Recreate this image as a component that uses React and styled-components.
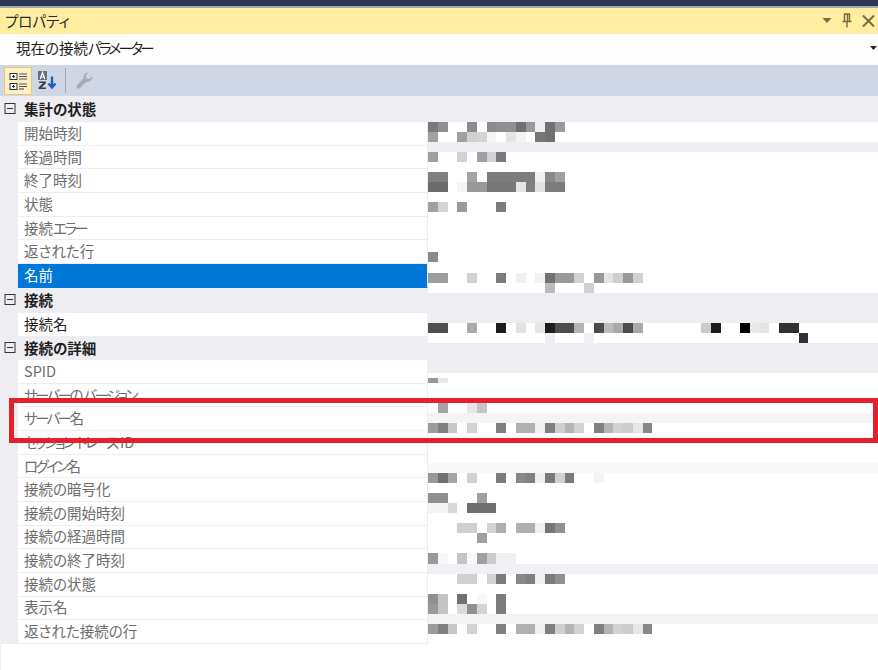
import React from "react";
import styled, {createGlobalStyle} from "styled-components";

const GlobalStyle = createGlobalStyle`
html, body {
    margin: 0;
    padding: 0;
    background: #fff;
}
body {
    font-family: "Noto Sans CJK JP", "Liberation Sans", sans-serif;
    font-feature-settings: "palt";
}
`;

const Page = styled.div`
position: relative;
width: 878px;
height: 670px;
overflow: hidden;
background: #fff;
`;

const TopEdge = styled.div`
height: 6px;
background: #293955;
border-bottom: 2px solid #a3a7ae;
`;

const TitleBar = styled.div`
display: flex;
align-items: center;
height: 26px;
padding: 0 3px 1px 5px;
box-sizing: border-box;
background: #ffee9f;
color: #2a2a2a;
font-size: 14.5px;
`;

const TitleText = styled.div`
flex-grow: 1;
`;

const TitleIcons = styled.div`
display: flex;
align-items: center;
gap: 10px;
`;

const Combo = styled.div`
display: flex;
align-items: center;
height: 31px;
padding: 0 1px 4px 16px;
box-sizing: border-box;
background: #fdfdfd;
color: #1e1e1e;
font-size: 14.5px;
`;

const ComboText = styled.div`
flex-grow: 1;
`;

const Toolbar = styled.div`
display: flex;
align-items: center;
gap: 2px;
height: 31px;
padding: 0 4px;
background: #cfd6e5;
`;

const ToolButton = styled.div`
display: flex;
align-items: center;
justify-content: center;
width: ${props => props.$active ? "28px" : "26px"};
height: ${props => props.$active ? "28px" : "26px"};
box-sizing: border-box;
background: ${props => props.$active ? "#fff1c4" : "transparent"};
border: 1px solid ${props => props.$active ? "#e5c87b" : "transparent"};
`;

const ToolSeparator = styled.div`
width: 1px;
height: 25px;
margin: 0 3px;
background: #a0a7b5;
`;

const Grid = styled.div`
display: grid;
border-left: 1px solid #f1f1f4;
`;

const Row = styled.div`
display: flex;
height: 23.65px;
`;

const Gutter = styled.div`
flex: none;
width: 17px;
background: #eeeef2;
`;

const Name = styled.div`
display: flex;
align-items: center;
flex: none;
width: 410px;
box-sizing: border-box;
padding: 0 0 2px 6px;
font-size: 14.5px;
white-space: pre;
overflow: hidden;
color: ${props => props.$selected ? "#fff" : props.$editable ? "#1e1e1e" : "#6d6d6d"};
background: ${props => props.$selected ? "#0078d7" : "#fff"};
border-bottom: 1px solid ${props => props.$selected ? "#0078d7" : "#eeeef2"};
border-right: 1px solid #eeeef2;
`;

const Kana = styled.span`
letter-spacing: -2.6px;
`;

const Category = styled.div`
display: flex;
align-items: center;
height: ${props => props.$height}px;
box-sizing: border-box;
padding-bottom: 2px;
background: #eeeef2;
color: #1e1e1e;
font-size: 14.5px;
font-weight: 700;
`;

const Expander = styled.span`
display: flex;
flex: none;
width: 20px;
padding-left: 3px;
`;

const Rest = styled.div`
height: 26px;
border-left: 1px solid #f1f1f4;
`;

const ValueMosaic = styled.svg`
position: absolute;
left: 0;
top: 0;
pointer-events: none;
`;

const RedFrame = styled.div`
position: absolute;
left: 9px;
top: 398px;
width: 869px;
height: 45px;
box-sizing: border-box;
border: 5px solid #e3202b;
`;

const rows = [
    {category: "集計の状態", height: 26.2},
    {name: "開始時刻"},
    {name: "経過時間"},
    {name: "終了時刻"},
    {name: "状態"},
    {name: "接続エラー"},
    {name: "返された行"},
    {name: "名前", selected: true},
    {category: "接続", height: 25.2},
    {name: "接続名", editable: true},
    {category: "接続の詳細", height: 23.65},
    {name: "SPID"},
    {name: "サーバーのバージョン"},
    {name: "サーバー名"},
    {name: "セッション トレース ID"},
    {name: "ログイン名"},
    {name: "接続の暗号化"},
    {name: "接続の開始時刻"},
    {name: "接続の経過時間"},
    {name: "接続の終了時刻"},
    {name: "接続の状態"},
    {name: "表示名"},
    {name: "返された接続の行"},
];

// y, height, then [column, grey] pairs of the blurred values
const lastRow = [[0, 0x9c], [1, 0x80], [2, 0xc8], [4, 0xd2], [7, 0x80], [9, 0xb0], [10, 0xb0], [11, 0xf0], [12, 0x80], [13, 0xcf], [14, 0xb4], [15, 0xd2], [17, 0x80], [18, 0xb4], [19, 0xd2], [20, 0xcc], [21, 0xe6], [22, 0x88]];
const mosaic = [
    [122, 10, [[0, 0x7a], [1, 0x90], [4, 0x8c], [6, 0x8c], [7, 0x90], [8, 0x90], [9, 0x70], [10, 0x99], [11, 0xee], [12, 0x70], [13, 0x99]]],
    [132, 10, [[0, 0xa0], [3, 0xa0], [4, 0xd0], [5, 0xd4], [6, 0xf5], [8, 0xe4], [9, 0xf4], [11, 0x77], [12, 0x70]]],
    [152, 10, [[0, 0xa0], [3, 0xd2], [5, 0xa0], [6, 0xd2], [7, 0x7a]]],
    [172, 10, [[0, 0x80], [1, 0x80], [4, 0xa4], [6, 0x7c], [7, 0x7c], [8, 0x7c], [9, 0x7c], [10, 0x7c], [11, 0xf0], [12, 0x88], [13, 0xa0]]],
    [182, 10, [[0, 0x6c], [1, 0x6c], [3, 0xf4], [4, 0x99], [5, 0x99], [6, 0x77], [7, 0x77], [8, 0x77], [9, 0xe5], [10, 0x80], [11, 0xe2], [12, 0x7c], [13, 0x7c]]],
    [202, 10, [[0, 0xa0], [1, 0xd4], [3, 0x9a], [7, 0x7c]]],
    [252, 10, [[0, 0x8a]]],
    [273, 10, [[0, 0x9c], [1, 0x9c], [4, 0xd2], [7, 0x7c], [9, 0xf0], [11, 0xf2], [12, 0x70], [13, 0x99], [14, 0x99], [15, 0xd2], [17, 0x99], [18, 0xe4], [19, 0xcf], [20, 0x99], [21, 0xd2]]],
    [283, 10, [[12, 0xbb], [16, 0xd0]]],
    [323, 10, [[0, 0x50], [1, 0x50], [4, 0xaa], [7, 0x1c], [9, 0xe2], [11, 0xe6], [12, 0x1c], [13, 0x4c], [14, 0x4c], [15, 0xb4], [17, 0x4c], [18, 0xbb], [19, 0xaa], [20, 0x4c], [21, 0xaa], [28, 0xcc], [29, 0x1c], [32, 0x00], [33, 0xe8], [34, 0xe4], [36, 0x30], [37, 0x30]]],
    [333, 10, [[12, 0xee], [16, 0xf0], [38, 0x33]]],
    [378, 5, [[0, 0x99], [1, 0xe8]]],
    [403, 10, [[1, 0xa4], [4, 0xe6], [5, 0xc4]]],
    [423, 10, lastRow],
    [473, 10, [[0, 0x99], [1, 0x70], [2, 0xa4], [4, 0xd0], [7, 0x7c], [9, 0x88], [10, 0x80], [11, 0xf0], [12, 0x7a], [13, 0xd0], [14, 0x7c], [17, 0xf4]]],
    [493, 10, [[0, 0x90], [1, 0x90], [5, 0xa0]]],
    [503, 10, [[0, 0xf4], [1, 0xf4], [2, 0xd8], [4, 0x70], [5, 0x70], [6, 0x70]]],
    [523, 10, [[3, 0xd0], [4, 0xd0], [6, 0xd4], [7, 0xb0], [9, 0xb0], [10, 0xb0], [11, 0xf0], [12, 0x77], [13, 0x90]]],
    [533, 10, [[5, 0xa0]]],
    [553, 11, [[0, 0x99], [1, 0xf8], [3, 0xc4], [4, 0xf8], [5, 0xa0], [6, 0xcc], [7, 0xf0], [8, 0xf0]]],
    [574, 10, [[3, 0xd0], [4, 0xd0], [6, 0xd2], [7, 0x7c], [9, 0x88], [10, 0x80], [11, 0xf0], [12, 0x7a], [13, 0x90]]],
    [594, 10, [[0, 0x90], [1, 0xc4], [3, 0x70], [5, 0xf8], [7, 0x7c]]],
    [604, 10, [[0, 0x99], [1, 0xc4], [3, 0xdc], [4, 0x90], [5, 0xd4], [7, 0x7c]]],
    [624, 10, lastRow],
];

// the strips the blur leaves across the value column
const bands = [
    [142, 10, "#eeeef3"],
    [263, 30, "#fff"],
    [293, 30, "#eeeef2"],
    [323, 20, "#fff"],
    [343, 30, "#eeeef2"],
    [413, 10, "#f4f4f7"],
    [463, 10, "#f8f8fa"],
    [564, 10, "#f0f0f5"],
    [614, 10, "#f4f4f7"],
];

const grey = g => `rgb(${g},${g},${g})`;

// katakana is much narrower in the original UI font
const narrowKana = text => text.split(/([ァ-ヶー]+)/).map((part, i) =>
    i % 2 === 1 ? <Kana key={i}>{part}</Kana> : part
);

const Mosaic = () => <ValueMosaic width="878" height="670" shapeRendering="crispEdges">
    {bands.map(([y, h, fill]) => <rect key={y} x="428" y={y} width="450" height={h} fill={fill}/>)}
    {mosaic.map(([y, h, cells]) => cells.map(([col, g]) =>
        <rect key={y + "-" + col} x={428 + col * 9.75} y={y} width="9.75" height={h} fill={grey(g)}/>
    ))}
</ValueMosaic>;

const Minus = () => <svg width="12" height="13" viewBox="0 0 12 13">
    <rect x="1" y="1.5" width="10" height="10" fill="none" stroke="#333"/>
    <path d="M3 6.5h6" stroke="#333"/>
</svg>;

const DropIcon = ({color, width = 10, height = 5}) => <svg width={width} height={height} viewBox="0 0 9 5">
    <path d="M0 0h9L4.5 5z" fill={color}/>
</svg>;

const PinIcon = () => <svg width="10" height="15" viewBox="0 0 10 15">
    <path d="M2.5 1h5v7.5h-5zM5.5 1.5v7M.5 8.5h9M5 8.5V14.5" fill="none" stroke="#786a3e" strokeWidth="1.4"/>
</svg>;

const CloseIcon = () => <svg width="13" height="12" viewBox="0 0 13 12">
    <path d="M1 .5l11 11M12 .5L1 11.5" stroke="#786a3e" strokeWidth="2"/>
</svg>;

const CategorizedIcon = () => <svg width="19" height="18" viewBox="0 0 19 18">
    <rect x="1" y="1.5" width="7" height="6" fill="#fff" stroke="#333"/>
    <rect x="1" y="11.5" width="7" height="6" fill="#fff" stroke="#333"/>
    <path d="M3 4.5h3M4.5 3v3M3 14.5h3M4.5 13v3" stroke="#333"/>
    <path d="M10 2h8M10 4.5h8M10 7h8M10 12h8M10 14.5h8" stroke="#555" strokeWidth="1.1"/>
    <path d="M10 17h5" stroke="#555" strokeWidth="1.1"/>
</svg>;

const SortIcon = () => <svg width="19" height="19" viewBox="0 0 19 19">
    <rect x="0" y="0" width="9" height="9" fill="#6a6e75"/>
    <path d="M2.2 8l2.3-6.5L6.8 8M3 6h3" fill="none" stroke="#fff" strokeWidth="1.2"/>
    <path d="M1 10.5h7v1.6L3.6 16.4H8V18H.6v-1.6L5 12.1H1z" fill="#3c3f44"/>
    <path d="M14 5.5v10.5M10.5 12.5l3.5 4 3.5-4" fill="none" stroke="#1a5fb4" strokeWidth="2.4"/>
</svg>;

const WrenchIcon = () => <svg width="17" height="17" viewBox="0 0 17 17">
    <path d="M2.6 14.4L9 8" stroke="#a7abb2" strokeWidth="4.2" strokeLinecap="round"/>
    <path d="M16.4 4.2a5 5 0 0 1-7 5.2L7.6 7.6A5 5 0 0 1 12.8.6L9.8 3.4l.8 3 3 .8 2.6-3z" fill="#a7abb2"/>
</svg>;

export default class App extends React.Component {
    render() {
        return <Page>
            <GlobalStyle/>
            <TopEdge/>
            <TitleBar>
                <TitleText>プロパティ</TitleText>
                <TitleIcons>
                    <DropIcon color="#786a3e"/>
                    <PinIcon/>
                    <CloseIcon/>
                </TitleIcons>
            </TitleBar>
            <Combo>
                <ComboText>{narrowKana("現在の接続パラメーター")}</ComboText>
                <DropIcon color="#222" width={7} height={4}/>
            </Combo>
            <Toolbar>
                <ToolButton $active><CategorizedIcon/></ToolButton>
                <ToolButton><SortIcon/></ToolButton>
                <ToolSeparator/>
                <ToolButton><WrenchIcon/></ToolButton>
            </Toolbar>
            <Grid>
                {rows.map(row => row.category
                    ? <Category key={row.category} $height={row.height}>
                        <Expander><Minus/></Expander>
                        {row.category}
                    </Category>
                    : <Row key={row.name}>
                        <Gutter/>
                        <Name $selected={row.selected} $editable={row.editable}>
                            <span>{narrowKana(row.name)}</span>
                        </Name>
                    </Row>)}
            </Grid>
            <Rest/>
            <Mosaic/>
            <RedFrame/>
        </Page>;
    }
}
